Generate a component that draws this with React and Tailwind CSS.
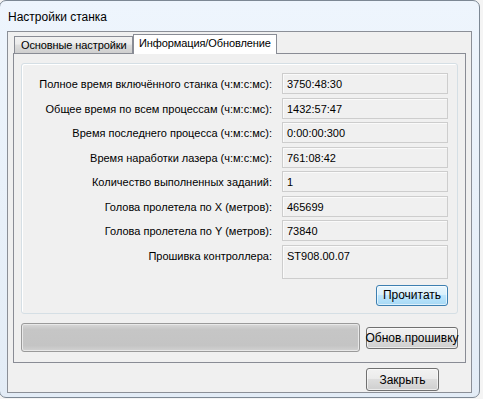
import React from 'react';

const rows = [
  ['Полное время включённого станка (ч:м:с:мс):', '3750:48:30'],
  ['Общее время по всем процессам (ч:м:с:мс):', '1432:57:47'],
  ['Время последнего процесса (ч:м:с:мс):', '0:00:00:300'],
  ['Время наработки лазера (ч:м:с:мс):', '761:08:42'],
  ['Количество выполненных заданий:', '1'],
  ['Голова пролетела по X (метров):', '465699'],
  ['Голова пролетела по Y (метров):', '73840'],
];

function WinButton({ children, primary, className = '' }) {
  const look = primary
    ? 'border-[#3c7fb1] bg-[linear-gradient(#eaf6fd_0%,#d9f0fc_45%,#bee6fd_50%,#a7d9f5_100%)]'
    : 'border-[#707070] bg-[linear-gradient(#f2f2f2_0%,#ebebeb_45%,#dddddd_50%,#cfcfcf_100%)]';
  return (
    <div className={`flex items-center justify-center rounded-[3px] border shadow-[inset_0_0_0_1px_rgba(255,255,255,0.6)] text-[12px] text-black whitespace-nowrap ${look} ${className}`}>
      {children}
    </div>
  );
}

export default function App() {
  return (
    <div className="w-[483px] h-[399px] bg-[#f4f4f4] overflow-hidden" style={{ fontFamily: '"Liberation Sans", Arial, sans-serif' }}>
      <div className="ml-[-1px] w-[481px] h-[398px] rounded-[7px] border border-[#7d8894] bg-[linear-gradient(#eef5fd,#e3ecf6)] flex flex-col px-[7px] pb-[4px]">
        {/* Title */}
        <div className="h-[30px] pl-[1px] flex items-center pt-[1px] text-[12px] text-black">Настройки станка</div>

        {/* Client area */}
        <div className="flex-1 border border-[#8b8f97] bg-[#f0f0f0] flex flex-col pl-[5px] pr-[7px] pt-[1px]">
          {/* Tabs */}
          <div className="flex items-end h-[20px] pl-[1px]">
            <div className="w-[119px] h-[17px] border border-b-0 border-[#898c95] bg-[linear-gradient(#f2f2f2_0%,#ebebeb_45%,#dddddd_50%,#cfcfcf_100%)] flex items-center pl-[6px] pt-[1px] text-[11px] tracking-[-0.1px] text-black whitespace-nowrap">
              Основные настройки
            </div>
            <div className="relative z-10 w-[144px] h-[20px] -mb-px border border-b-0 border-[#898c95] bg-white flex items-center pb-[2px] pl-[5px] text-[11px] tracking-[-0.1px] text-black whitespace-nowrap">
              Информация/Обновление
            </div>
          </div>

          {/* Tab panel */}
          <div className="w-[453px] h-[310px] border border-[#898c95] bg-[#f0f0f0] px-[7px] pt-[9px] flex flex-col">
            {/* Group box */}
            <div className="w-[437px] h-[251px] rounded-[3px] border border-[#d5dfe5] shadow-[inset_1px_1px_0_#ffffff] px-[9px] pt-[9px] flex flex-col">
              <div className="flex flex-col gap-[3.5px]">
                {rows.map(([label, value]) => (
                  <div key={label} className="flex items-center">
                    <div className="flex-1 text-right pr-[10px] pt-[2px] text-[11px] text-black whitespace-nowrap">{label}</div>
                    <div className="w-[166px] h-[21px] border border-[#cdcdcd] bg-[#f0f0f0] shadow-[inset_1px_1px_0_#fafafa] pl-[4px] pt-[2px] text-[11px] text-black">
                      {value}
                    </div>
                  </div>
                ))}
                <div className="flex items-start">
                  <div className="flex-1 text-right pr-[10px] pt-[3px] text-[11px] text-black whitespace-nowrap">Прошивка контроллера:</div>
                  <div className="w-[166px] h-[34px] border border-[#cdcdcd] bg-[#f0f0f0] shadow-[inset_1px_1px_0_#fafafa] pl-[4px] pt-[2px] text-[11px] text-black">
                    ST908.00.07
                  </div>
                </div>
              </div>
              <div className="flex justify-end mt-[6px]">
                <WinButton primary className="w-[72px] h-[21px]">Прочитать</WinButton>
              </div>
            </div>

            {/* Progress + update */}
            <div className="flex items-center mt-[9px] gap-[6px]">
              <div className="w-[340px] h-[29px] rounded-[3px] border border-[#9a9a9a] bg-[linear-gradient(#d8d8d8_0%,#c6c6c6_20%,#c4c4c4_80%,#d2d2d2_100%)] shadow-[inset_0_0_0_1px_#e8e8e8]" />
              <WinButton className="w-[92px] h-[22px] text-[11.5px]">Обнов.прошивку</WinButton>
            </div>
          </div>

          {/* Close */}
          <div className="flex justify-end pr-[25px] mt-[5px]">
            <WinButton className="w-[73px] h-[23px]">Закрыть</WinButton>
          </div>
        </div>
      </div>
    </div>
  );
}
